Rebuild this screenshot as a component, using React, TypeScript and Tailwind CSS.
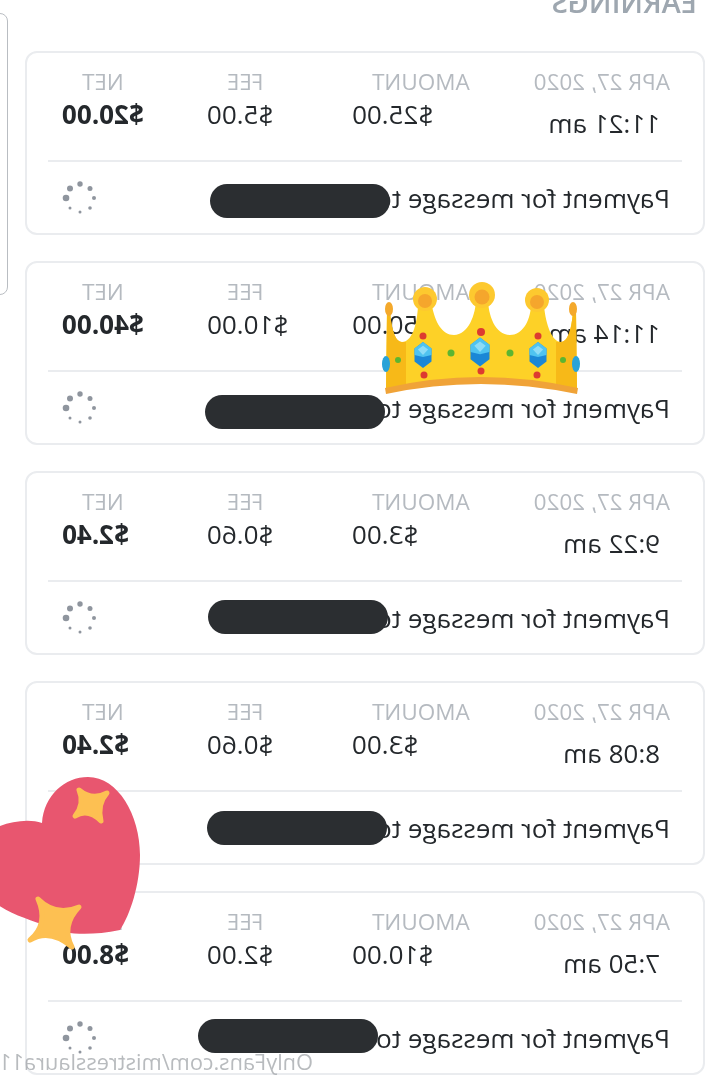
const rows = [
  { time: '11:21 am', amount: '$25.00', fee: '$5.00', net: '$20.00', pill: 'left-[313px] top-[131px]' },
  { time: '11:14 am', amount: '$50.00', fee: '$10.00', net: '$40.00', pill: 'left-[318px] top-[132px]' },
  { time: '9:22 am', amount: '$3.00', fee: '$0.60', net: '$2.40', pill: 'left-[315px] top-[127px]' },
  { time: '8:08 am', amount: '$3.00', fee: '$0.60', net: '$2.40', pill: 'left-[316px] top-[128px]' },
  { time: '7:50 am', amount: '$10.00', fee: '$2.00', net: '$8.00', pill: 'left-[325px] top-[126px]' },
];

// dots are mirrored along with the page, biggest one ends up on the left on screen
const dots = [
  [0, -14, 2.7],
  [-10, -9.5, 2.5],
  [-14, 0, 2],
  [-10, 10, 1.8],
  [0, 14, 1.5],
  [10, 10, 1.5],
  [14, 0, 3.3],
  [10, -9.5, 3],
];

function Spinner() {
  return (
    <svg width="36" height="36" viewBox="-18 -18 36 36" className="shrink-0">
      {dots.map(([x, y, r], i) => (
        <circle key={i} cx={x} cy={y} r={r} fill="#8f959e" />
      ))}
    </svg>
  );
}

function Col({ label, value, bold }: { label: string; value: string; bold?: boolean }) {
  return (
    <div className="flex flex-col items-end">
      <div className="pr-5 text-[22.5px] leading-6 whitespace-nowrap text-[#b5bac0]">{label}</div>
      <div className={`mt-[8px] text-[26px] leading-6 text-[#24282c] ${bold ? 'font-bold' : ''}`}>{value}</div>
    </div>
  );
}

function Card({ row }: { row: (typeof rows)[number] }) {
  return (
    <div className="relative box-border flex h-[184px] w-[680px] flex-col rounded-[12px] border-2 border-[#eaecef] bg-white">
      <div className="grid h-[107px] grid-cols-[173px_145px_145px_145px] pl-[33px] pt-[17px]">
        <div>
          <div className="text-[22.5px] leading-6 whitespace-nowrap text-[#b5bac0]">APR 27, 2020</div>
          <div className="mt-[17px] pl-[10px] text-[26px] leading-6 whitespace-nowrap text-[#24282c]">{row.time}</div>
        </div>
        <Col label="AMOUNT" value={row.amount} />
        <Col label="FEE" value={row.fee} />
        <Col label="NET" value={row.net} bold />
      </div>
      <div className="mx-[21px] h-[2px] bg-[#eaecef]" />
      <div className="flex flex-1 items-center justify-between pl-[33px] pr-[35px]">
        <span className="text-[26px] leading-7 whitespace-nowrap text-[#24282c]">Payment for message to</span>
        <Spinner />
      </div>
      <div className={`absolute h-[34px] w-[180px] rounded-[17px] bg-[#2b2e31] ${row.pill}`} />
    </div>
  );
}

function Gem({ x, y, w, h }: { x: number; y: number; w: number; h: number }) {
  const l = x - w / 2;
  const r = x + w / 2;
  const t = y - h / 2;
  const b = y + h / 2;
  const up = t + h * 0.25;
  const dn = t + h * 0.75;
  return (
    <g>
      <path d={`M${x} ${t} L${r} ${up} L${r} ${dn} L${x} ${b} L${l} ${dn} L${l} ${up} Z`} fill="#1b87d6" />
      <path d={`M${x} ${t} L${r} ${up} L${r} ${y} L${x} ${y + h * 0.08} L${l} ${y} L${l} ${up} Z`} fill="#4fc3f0" />
      <path d={`M${x} ${t + h * 0.14} L${x + w * 0.3} ${up + 1} L${x} ${y} L${x - w * 0.3} ${up + 1} Z`} fill="#8ddcf7" />
    </g>
  );
}

function Crown() {
  return (
    <svg viewBox="0 0 230 130" className="absolute left-[370px] top-[270px] h-[130px] w-[230px]">
      <path
        d="M16 120 L17 40 L20 40 C21 58 25 72 32 72 C42 72 47 55 48 36 L62 36 C65 52 72 65 84 65 C98 65 106 45 106 28 L118 28 C118 45 125 65 140 65 C152 65 160 52 161 36 L174 36 C176 55 182 72 191 72 C198 72 202 58 203 40 L206 40 L207 120 Q110 98 16 120 Z"
        fill="#fdd127"
      />
      <path d="M16 120 L17 40 L20 40 C21 58 25 72 32 72 L36 72 L36 114 Z" fill="#f7b918" />
      <path d="M207 120 L206 40 L203 40 C202 58 198 72 191 72 L186 72 L186 114 Z" fill="#f7b918" />
      <path d="M15 118 Q110 96 208 118 L207 124 Q110 104 16 124 Z" fill="#f0a338" />
      <ellipse cx="19" cy="39" rx="4" ry="7" fill="#f4a92c" />
      <ellipse cx="203" cy="39" rx="4" ry="7" fill="#f4a92c" />
      <circle cx="55" cy="29" r="12" fill="#fdc92f" />
      <circle cx="55" cy="31" r="7" fill="#f5a62c" />
      <circle cx="112" cy="25" r="13" fill="#fdc92f" />
      <circle cx="112" cy="27" r="7.5" fill="#f5a62c" />
      <circle cx="167" cy="30" r="12" fill="#fdc92f" />
      <circle cx="167" cy="32" r="7" fill="#f5a62c" />
      <ellipse cx="16" cy="94" rx="4" ry="8" fill="#29a3d8" />
      <ellipse cx="206" cy="94" rx="4" ry="8" fill="#29a3d8" />
      <Gem x={53} y={85} w={17} h={26} />
      <Gem x={110} y={82} w={19} h={29} />
      <Gem x={168} y={85} w={17} h={26} />
      <circle cx="53" cy="66" r="3.5" fill="#dd3b30" />
      <circle cx="111" cy="62" r="4" fill="#dd3b30" />
      <circle cx="168" cy="66" r="3.5" fill="#dd3b30" />
      <circle cx="54" cy="105" r="3.5" fill="#dd3b30" />
      <circle cx="111" cy="101" r="3.5" fill="#dd3b30" />
      <circle cx="167" cy="105" r="3.5" fill="#dd3b30" />
      <circle cx="28" cy="90" r="3" fill="#5cb531" />
      <circle cx="81" cy="83" r="3.5" fill="#5cb531" />
      <circle cx="140" cy="83" r="3.5" fill="#5cb531" />
      <circle cx="193" cy="90" r="3" fill="#5cb531" />
    </svg>
  );
}

function Heart() {
  return (
    <svg viewBox="0 0 200 190" className="absolute left-0 top-[770px] h-[190px] w-[200px]">
      <path
        d="M42 53 C44 25 65 7 88 7 C118 7 140 45 140 85 C140 115 130 145 120 160 C90 166 65 165 50 157 C30 150 12 145 -5 133 L-5 58 C8 52 28 48 42 53 Z"
        fill="#e8566f"
      />
      <path
        d="M79 20 Q92 31 107 23 Q97 34 101 51 Q88 38 75 46 Q85 34 79 20 Z"
        fill="#fdc052"
        stroke="#fdc052"
        strokeWidth="5"
        strokeLinejoin="round"
      />
      <path
        d="M38 129 Q56 147 79 137 Q61 156 72 177 Q50 158 30 170 Q49 154 38 129 Z"
        fill="#fdc052"
        stroke="#fdc052"
        strokeWidth="5"
        strokeLinejoin="round"
      />
    </svg>
  );
}

export default function App() {
  return (
    <div className="relative h-[1080px] w-[727px] overflow-hidden bg-white font-['Open_Sans',sans-serif] blur-[0.4px]">
      <div className="relative h-[1080px] w-[727px] -scale-x-100">
        <div className="h-[51px] overflow-hidden pl-[30px]">
          <div className="-mt-[13px] text-[29px] leading-[30px] font-semibold text-[#9ea7b0]">EARNINGS</div>
        </div>
        <div className="flex flex-col gap-[26px] pl-[22px]">
          {rows.map((row) => (
            <Card key={row.time} row={row} />
          ))}
        </div>
        <div className="absolute left-[719px] top-[13px] h-[282px] w-[40px] rounded-[8px] border border-[#b9bdc2]" />
        <div className="absolute left-[414px] top-[1048px] text-[21.8px] leading-7 whitespace-nowrap text-[#9a9ea3]/70">
          OnlyFans.com/mistresslaura11
        </div>
      </div>
      <Crown />
      <Heart />
    </div>
  );
}
